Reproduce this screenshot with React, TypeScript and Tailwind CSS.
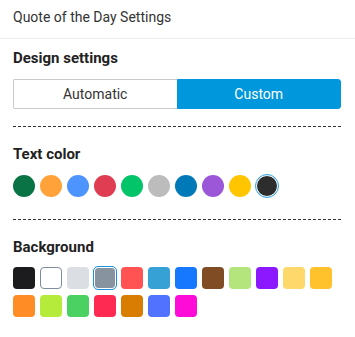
import React, { useState } from 'react';

const textColors = [
  '#0a7346', '#ffa23a', '#4e94ff', '#e03d52', '#04c46a',
  '#bcbcbc', '#0079b9', '#9b57d7', '#ffc501', '#2d2d2d',
];

const bgColors = [
  '#1c1c1e', '#ffffff', '#dbdfe3', '#87939f', '#ff5252', '#36a1d4',
  '#1677ff', '#7f4c24', '#b3e57c', '#8c18ff', '#ffd86b', '#ffc22d',
  '#ff8c24', '#b5ec3b', '#4ad161', '#ff2a52', '#d97d02', '#5072ff', '#ff0bd8',
];

export default function App() {
  const [mode, setMode] = useState<'auto' | 'custom'>('custom');
  const [text, setText] = useState(9);
  const [bg, setBg] = useState(3);

  return (
    <div className="w-[355px] h-[337px] bg-white text-[#2b2b2b] font-['Roboto',sans-serif]">
      <div className="h-[39px] pl-[13px] pt-[8px] border-b border-[#ececec] text-[14px] leading-[18px] text-[#333]">
        Quote of the Day Settings
      </div>

      <div className="pl-[13px] pr-[14px]">
        <h2 className="mt-[9px] text-[15px] leading-[20px] font-bold text-[#222]">Design settings</h2>

        <div className="mt-[11px] flex h-[30px] text-[14px]">
          <button
            onClick={() => setMode('auto')}
            className={`flex-1 flex items-center justify-center rounded-l-[2px] border ${mode === 'auto' ? 'bg-[#0097dd] border-[#0097dd] text-white' : 'border-[#c9c9c9] border-r-0 text-[#333]'}`}
          >
            Automatic
          </button>
          <button
            onClick={() => setMode('custom')}
            className={`flex-1 flex items-center justify-center rounded-r-[3px] border ${mode === 'custom' ? 'bg-[#0097dd] border-[#0097dd] text-white' : 'border-[#c9c9c9] border-l-0 text-[#333]'}`}
          >
            Custom
          </button>
        </div>

        <div className="mt-[17px] border-t border-dashed border-[#333]" />

        <h2 className="mt-[17px] text-[15px] leading-[20px] font-bold text-[#222]">Text color</h2>
        <div className="mt-[11px] flex gap-[5px]">
          {textColors.map((c, i) => (
            <button
              key={c}
              onClick={() => setText(i)}
              className={`w-[22px] h-[22px] rounded-full ${i === text ? 'border border-white outline-[1.5px] outline-solid outline-[#2aa3e6]' : ''}`}
              style={{ backgroundColor: c }}
            />
          ))}
        </div>

        <div className="mt-[22px] border-t border-dashed border-[#333]" />

        <h2 className="mt-[17px] text-[15px] leading-[20px] font-bold text-[#222]">Background</h2>
        <div className="mt-[10px] flex flex-wrap gap-x-[5px] gap-y-[6px] w-[320px]">
          {bgColors.map((c, i) => (
            <button
              key={c}
              onClick={() => setBg(i)}
              className={`w-[22px] h-[22px] rounded-[4px] ${i === bg ? 'border border-white outline-[1.5px] outline-solid outline-[#1a90e0]' : c === '#ffffff' ? 'border border-[#7d8d9c]' : ''}`}
              style={{ backgroundColor: c }}
            />
          ))}
        </div>
      </div>
    </div>
  );
}
